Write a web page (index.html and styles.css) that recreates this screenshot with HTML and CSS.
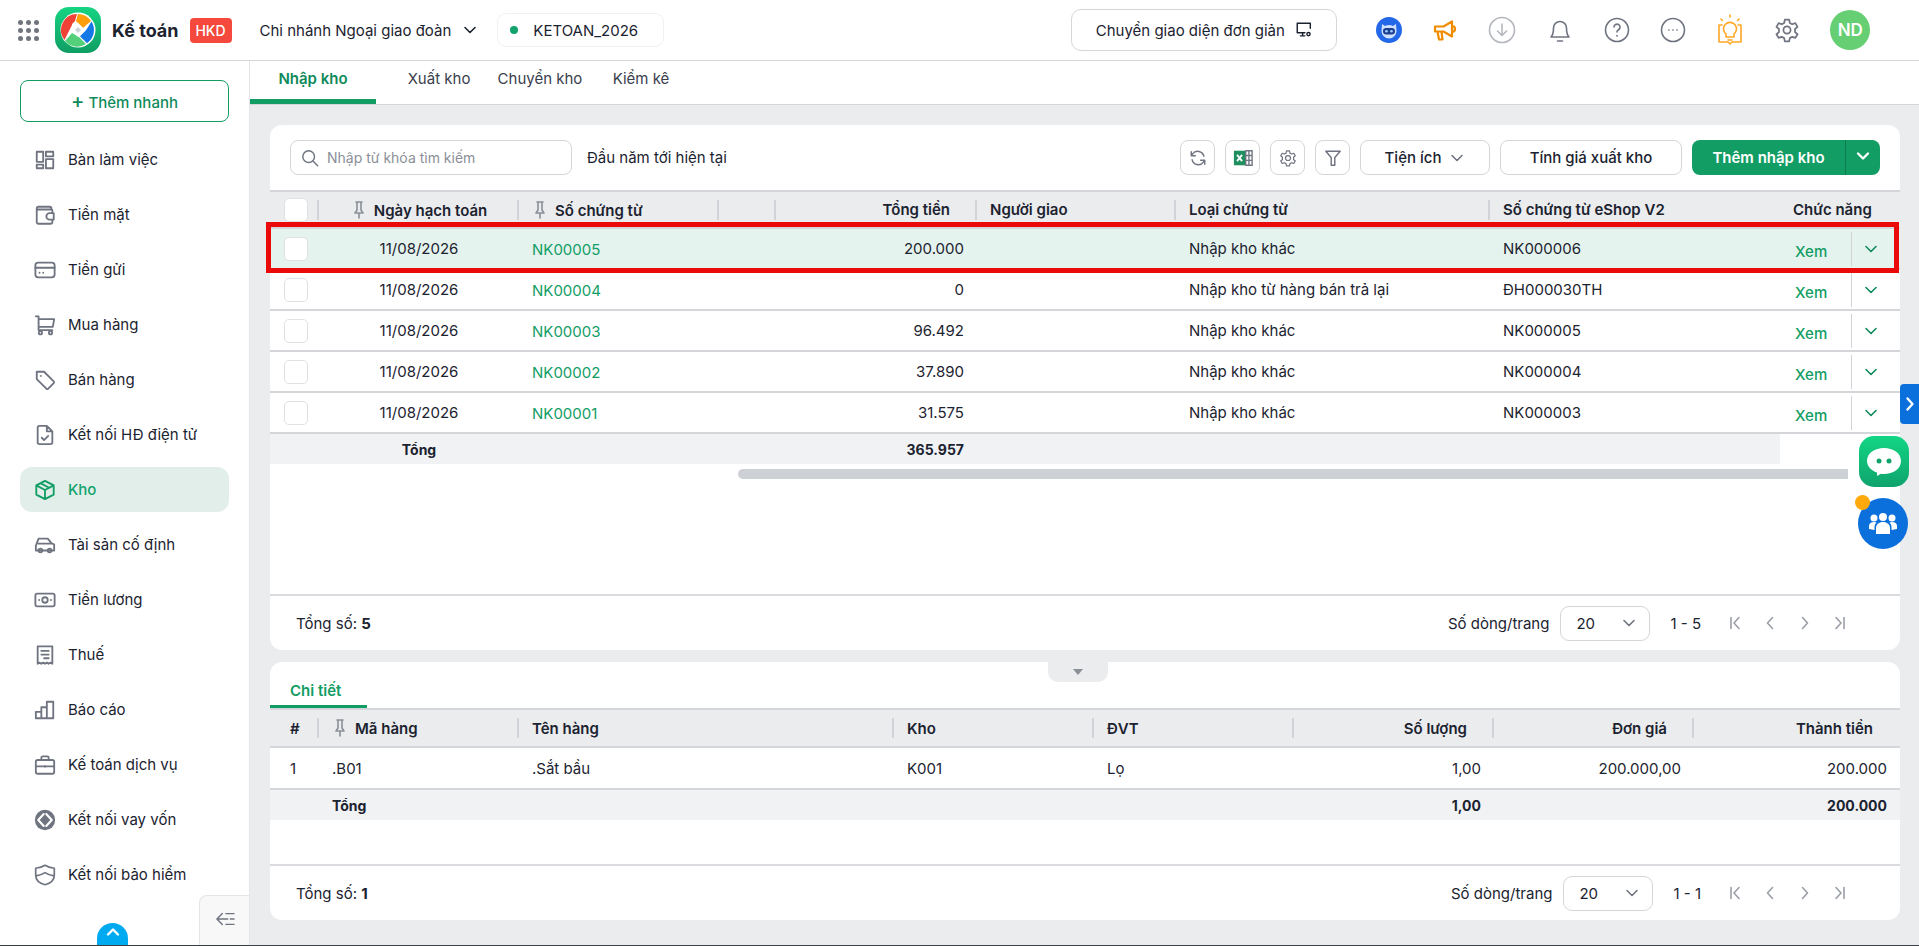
FILE: index.html
```html
<!DOCTYPE html>
<html lang="vi">
<head>
    <meta charset="UTF-8">
    <title>Kế toán - Nhập kho</title>
    <link rel="stylesheet" href="styles.css">
</head>
<body>
    <svg class="sprite" xmlns="http://www.w3.org/2000/svg">
        <symbol id="i-pin" viewBox="0 0 16 20"><path d="M5 2h6M6 2v8l-2 3h8l-2-3V2M8 13v5"/></symbol>
        <symbol id="i-down" viewBox="0 0 16 16"><path d="M3 5.5l5 5 5-5"/></symbol>
        <symbol id="i-first" viewBox="0 0 16 16"><path d="M4 2.5v11M12 2.5L7 8l5 5.5"/></symbol>
        <symbol id="i-prev" viewBox="0 0 16 16"><path d="M10.5 2.5L5.5 8l5 5.5"/></symbol>
        <symbol id="i-next" viewBox="0 0 16 16"><path d="M5.5 2.5l5 5.5-5 5.5"/></symbol>
        <symbol id="i-last" viewBox="0 0 16 16"><path d="M12 2.5v11M4 2.5L9 8l-5 5.5"/></symbol>
        <symbol id="i-gear" viewBox="0 0 24 24"><path d="M10 2.5h4l.6 3 2.2 1.2 2.9-1 2 3.4-2.3 2v2.8l2.3 2-2 3.4-2.9-1-2.2 1.2-.6 3h-4l-.6-3-2.2-1.2-2.9 1-2-3.4 2.3-2v-2.8l-2.3-2 2-3.4 2.9 1 2.2-1.2z"/><circle cx="12" cy="12" r="3.3"/></symbol>
    </svg>

    <header class="topbar">
        <div class="apps"><i></i><i></i><i></i><i></i><i></i><i></i><i></i><i></i><i></i></div>
        <div class="logo">
            <svg viewBox="0 0 46 46" width="46" height="46">
                <circle cx="23" cy="23" r="17.5" fill="#fff"/>
                <path d="M23 7a16 16 0 0 1 13 7l-8 7-7-7z" fill="#ff9d0a"/>
                <path d="M36.5 14.5a16 16 0 0 1-4.500 21.800l-7-7 6-6z" fill="#1478e6"/>
                <path d="M31 37a16 16 0 0 1-21-3l7-8 7 4z" fill="#55d07a"/>
                <path d="M9.500 33a16 16 0 0 1 12.500-26l-2 7-3 3 0 1z" fill="#ef4136"/>
                <path d="M23 16l7 7-7 7-7-7z" fill="#fff"/>
                <path d="M23 20l3 3-3 3-3-3z" fill="#cfd4da"/>
            </svg>
        </div>
        <span class="app-name">Kế toán</span>
        <span class="hkd">HKD</span>
        <button class="branch">Chi nhánh Ngoại giao đoàn <svg class="ico-sm dark"><use href="#i-down"/></svg></button>
        <div class="db-pill"><i></i>KETOAN_2026</div>

        <button class="switch-ui">Chuyển giao diện đơn giản
            <svg viewBox="0 0 20 20" width="18" height="18" class="line dark"><path d="M17 8V2.500H2.500V13H11M6 16.500h5M8.500 13v3.500"/><circle cx="15" cy="14.500" r="1.800"/></svg>
        </button>

        <div class="top-icons">
            <svg viewBox="0 0 26 26" width="26" height="26"><circle cx="13" cy="13" r="13" fill="#2368e8"/><path d="M6 7l3 2a9 9 0 0 1 8 0l3-2 .5 7a7.500 7.500 0 0 1-15 0z" fill="#cfe0ff"/><rect x="7" y="11" width="12" height="6.500" rx="3.200" fill="#1c3f8f"/><circle cx="10.500" cy="14.200" r="1.300" fill="#9fd0ff"/><circle cx="15.500" cy="14.200" r="1.300" fill="#9fd0ff"/></svg>
            <svg viewBox="0 0 26 26" width="26" height="26" class="line orange"><path d="M3 9.500h8.500L20 4.500v15l-8.500-5H3zM5.500 14.500l1.500 8h3.500l-1-8M20 9a3 3 0 0 1 0 6"/></svg>
            <svg viewBox="0 0 28 28" width="28" height="28" class="line pale"><circle cx="14" cy="14" r="12.500"/><path d="M14 8v11M9.500 15l4.500 4.500 4.500-4.500"/></svg>
            <svg viewBox="0 0 28 30" width="28" height="30" class="line gray"><path d="M5 22c2-2 2.500-4 2.500-9a6.500 6.500 0 0 1 13 0c0 5 .5 7 2.500 9zM5 22h18M11.500 26h5"/></svg>
            <svg viewBox="0 0 26 26" width="26" height="26" class="line gray"><circle cx="13" cy="13" r="11.500"/><path d="M10 10a3 3 0 1 1 4.500 2.700c-1 .6-1.500 1.200-1.500 2.300M13 18.500v.6"/></svg>
            <svg viewBox="0 0 26 26" width="26" height="26" class="line gray"><circle cx="13" cy="13" r="11.500"/><path d="M8.800 13h.2M12.900 13h.2M17 13h.2"/></svg>
            <svg viewBox="0 0 28 32" width="28" height="32" class="line amber"><path d="M3 11v17h9l2 2 2-2h9V11h-3M3 11h3"/><path d="M10 20a6.500 6.500 0 1 1 8 0v3h-8zM12 26h4M14 1v2M5 5l1.500 1.500M23 5l-1.500 1.500"/></svg>
            <svg viewBox="0 0 24 24" width="26" height="26" class="line gray"><use href="#i-gear"/></svg>
            <div class="avatar">ND</div>
        </div>
    </header>

    <div class="layout">
        <aside class="sidebar">
            <button class="quick-add"><span>+</span> Thêm nhanh</button>
            <nav class="menu">
                <a><svg viewBox="0 0 24 24"><path d="M3 3h7v11H3zM13 3h8v5h-8zM3 17h7v4H3zM13 11h8v10h-8z"/></svg>Bàn làm việc</a>
                <a><svg viewBox="0 0 24 24"><path d="M19 6V5a2 2 0 0 0-2-2H5a2 2 0 0 0-2 2v15a1.500 1.500 0 0 0 1.500 1.500H18a2 2 0 0 0 2-2v-2M3 6h16a1 1 0 0 1 1 1v3M21.500 10H17a2.500 2.500 0 0 0 0 7h4.500z"/></svg>Tiền mặt</a>
                <a><svg viewBox="0 0 24 24"><rect x="1.500" y="4" width="21" height="16" rx="3"/><path d="M1.500 9.500h21M6 15h.1M10 15h.1"/></svg>Tiền gửi</a>
                <a><svg viewBox="0 0 24 24"><path d="M2 2.500h3v15h15M5 5.500h17l-1.500 8.500H5"/><circle cx="7" cy="20.500" r="1.800"/><circle cx="18" cy="20.500" r="1.800"/></svg>Mua hàng</a>
                <a><svg viewBox="0 0 24 24"><path d="M3 3h8l10.500 10.500a1.500 1.500 0 0 1 0 2l-6 6a1.500 1.500 0 0 1-2 0L3 11z"/><path d="M7.500 7.500h.1"/></svg>Bán hàng</a>
                <a><svg viewBox="0 0 24 24"><path d="M14 2H6a2 2 0 0 0-2 2v16a2 2 0 0 0 2 2h12a2 2 0 0 0 2-2V8zM14 2v6h6M8.500 15l2.500 2.500 4.500-4.500"/></svg>Kết nối HĐ điện tử</a>
                <a class="active"><svg viewBox="0 0 24 24"><path d="M12 2l9.500 5v10L12 22l-9.500-5V7zM2.500 7l9.500 5 9.500-5M12 12v10M7 4.500l9.500 5"/></svg>Kho</a>
                <a><svg viewBox="0 0 24 24"><path d="M2 13l3-8h10l4 5 3 1.500V18h-20zM5 10.500h14"/><circle cx="7" cy="18" r="2"/><circle cx="17" cy="18" r="2"/></svg>Tài sản cố định</a>
                <a><svg viewBox="0 0 24 24"><rect x="1.500" y="5" width="21" height="14" rx="2"/><circle cx="12" cy="12" r="3"/><path d="M5.500 12h.1M18.500 12h.1"/></svg>Tiền lương</a>
                <a><svg viewBox="0 0 24 24"><path d="M4 2.500h16v19l-2-1.200-2 1.200-2-1.200-2 1.200-2-1.200-2 1.200-2-1.200-2 1.200zM8 7.500h8M8 11.500h8M11 15.500h5"/></svg>Thuế</a>
                <a><svg viewBox="0 0 24 24"><path d="M2 21v-7h6v7zM8 21V9h6v12zM14 21V3h7v18zM2 21h19"/></svg>Báo cáo</a>
                <a><svg viewBox="0 0 24 24"><rect x="2" y="6.500" width="20" height="15" rx="2"/><path d="M8 6.500V4a1.500 1.500 0 0 1 1.500-1.500h5A1.500 1.500 0 0 1 16 4v2.500M2 13.500h20M12 13v1"/></svg>Kế toán dịch vụ</a>
                <a><svg viewBox="0 0 26 26" class="big"><circle cx="13" cy="13" r="12" fill="#6f7480" stroke="none"/><path d="M11.500 6L5 13l6.500 7M14.500 6l6.500 7-6.500 7" stroke="#fff" stroke-width="2.500"/></svg>Kết nối vay vốn</a>
                <a><svg viewBox="0 0 26 26" class="big"><path d="M13 1.500c3 2 6.500 3 11 3.500v8c0 6-5 10-11 11.500C7 23 2 19 2 13V5c4.500-.500 8-1.500 11-3.500zM2.500 14c4-.500 7.500-1.800 10.500-3.800 3 2 6.500 3.300 10.500 3.800"/></svg>Kết nối bảo hiểm</a>
            </nav>
            <button class="scroll-top"><svg class="ico-sm white-line"><use href="#i-down"/></svg></button>
            <button class="collapse">
                <svg viewBox="0 0 24 20" width="22" height="18" class="line gray"><path d="M9 4l-6 6 6 6M3 10h12M13 4h9M18 10h4M13 16h9"/></svg>
            </button>
        </aside>

        <main class="content">
            <nav class="tabs">
                <a class="active">Nhập kho</a>
                <a>Xuất kho</a>
                <a>Chuyển kho</a>
                <a>Kiểm kê</a>
            </nav>

            <div class="panels">
                <section class="card card-main">
                    <div class="toolbar">
                        <div class="search">
                            <svg viewBox="0 0 20 20" width="18" height="18" class="line gray"><circle cx="8.500" cy="8.500" r="6.500"/><path d="M13.500 13.500l5 5"/></svg>
                            <span>Nhập từ khóa tìm kiếm</span>
                        </div>
                        <span class="period">Đầu năm tới hiện tại</span>
                        <div class="tools">
                            <button class="tool"><svg viewBox="0 0 20 20" width="18" height="18" class="line gray"><path d="M16.500 8A7 7 0 0 0 4 5.500L2.500 7.500M2.500 3v4.500H7M3.500 12A7 7 0 0 0 16 14.500l1.500-2M17.500 17v-4.500H13"/></svg></button>
                            <button class="tool">
                                <svg viewBox="0 0 22 22" width="20" height="20"><rect x="1" y="3" width="13" height="16" fill="#1f8f5f"/><path d="M4.500 7.500l5.500 7M10 7.500l-5.500 7" stroke="#fff" stroke-width="2"/><path d="M14 3h7v16h-7zM14 8.300h7M14 13.600h7M17.500 3v16" fill="none" stroke="#6f7480" stroke-width="1.500"/></svg>
                            </button>
                            <button class="tool"><svg viewBox="0 0 24 24" width="18" height="18" class="line gray"><use href="#i-gear"/></svg></button>
                            <button class="tool"><svg viewBox="0 0 20 20" width="18" height="18" class="line gray"><path d="M2 2.500h16l-6 7V18H8V9.500z"/></svg></button>
                            <button class="btn btn-util">Tiện ích <svg class="ico-sm gray"><use href="#i-down"/></svg></button>
                            <button class="btn btn-calc">Tính giá xuất kho</button>
                            <div class="btn-split">
                                <button>Thêm nhập kho</button>
                                <button class="more"><svg class="ico-sm white-line"><use href="#i-down"/></svg></button>
                            </div>
                        </div>
                    </div>

                    <table class="grid grid-main">
                        <colgroup>
                            <col style="width:49px"><col style="width:200px"><col style="width:200px"><col style="width:57px"><col style="width:201px"><col style="width:199px"><col style="width:314px"><col style="width:290px"><col>
                        </colgroup>
                        <thead>
                            <tr>
                                <th class="check"><span class="box"></span></th>
                                <th class="center"><svg class="pin"><use href="#i-pin"/></svg>Ngày hạch toán</th>
                                <th class="pinned"><svg class="pin"><use href="#i-pin"/></svg>Số chứng từ</th>
                                <th></th>
                                <th class="right">Tổng tiền</th>
                                <th>Người giao</th>
                                <th>Loại chứng từ</th>
                                <th class="flat">Số chứng từ eShop V2</th>
                                <th class="flat func">Chức năng</th>
                            </tr>
                        </thead>
                        <tbody>
                            <tr class="selected">
                                <td class="check"><span class="box"></span></td>
                                <td class="center">11/08/2026</td>
                                <td><a class="code">NK00005</a></td>
                                <td></td>
                                <td class="right">200.000</td>
                                <td></td>
                                <td>Nhập kho khác</td>
                                <td>NK000006</td>
                                <td class="actions"><div><a>Xem</a><span><svg class="ico-sm green"><use href="#i-down"/></svg></span></div></td>
                            </tr>
                            <tr>
                                <td class="check"><span class="box"></span></td>
                                <td class="center">11/08/2026</td>
                                <td><a class="code">NK00004</a></td>
                                <td></td>
                                <td class="right">0</td>
                                <td></td>
                                <td>Nhập kho từ hàng bán trả lại</td>
                                <td>ĐH000030TH</td>
                                <td class="actions"><div><a>Xem</a><span><svg class="ico-sm green"><use href="#i-down"/></svg></span></div></td>
                            </tr>
                            <tr>
                                <td class="check"><span class="box"></span></td>
                                <td class="center">11/08/2026</td>
                                <td><a class="code">NK00003</a></td>
                                <td></td>
                                <td class="right">96.492</td>
                                <td></td>
                                <td>Nhập kho khác</td>
                                <td>NK000005</td>
                                <td class="actions"><div><a>Xem</a><span><svg class="ico-sm green"><use href="#i-down"/></svg></span></div></td>
                            </tr>
                            <tr>
                                <td class="check"><span class="box"></span></td>
                                <td class="center">11/08/2026</td>
                                <td><a class="code">NK00002</a></td>
                                <td></td>
                                <td class="right">37.890</td>
                                <td></td>
                                <td>Nhập kho khác</td>
                                <td>NK000004</td>
                                <td class="actions"><div><a>Xem</a><span><svg class="ico-sm green"><use href="#i-down"/></svg></span></div></td>
                            </tr>
                            <tr>
                                <td class="check"><span class="box"></span></td>
                                <td class="center">11/08/2026</td>
                                <td><a class="code">NK00001</a></td>
                                <td></td>
                                <td class="right">31.575</td>
                                <td></td>
                                <td>Nhập kho khác</td>
                                <td>NK000003</td>
                                <td class="actions"><div><a>Xem</a><span><svg class="ico-sm green"><use href="#i-down"/></svg></span></div></td>
                            </tr>
                        </tbody>
                        <tfoot>
                            <tr>
                                <td></td>
                                <td class="center">Tổng</td>
                                <td></td>
                                <td></td>
                                <td class="right">365.957</td>
                                <td></td>
                                <td></td>
                                <td></td>
                                <td class="func-foot"></td>
                            </tr>
                        </tfoot>
                    </table>
                    <div class="hscroll"><i></i></div>
                    <div class="red-box"></div>

                    <div class="pager">
                        <span class="total">Tổng số: <b>5</b></span>
                        <span class="per-page">Số dòng/trang</span>
                        <div class="page-size">20 <svg class="ico-sm gray"><use href="#i-down"/></svg></div>
                        <span class="range">1 - 5</span>
                        <div class="page-nav">
                            <svg><use href="#i-first"/></svg><svg><use href="#i-prev"/></svg><svg><use href="#i-next"/></svg><svg><use href="#i-last"/></svg>
                        </div>
                    </div>
                </section>

                <section class="card card-detail">
                    <div class="detail-toggle"><i></i></div>
                    <div class="detail-tabs"><a>Chi tiết</a></div>
                    <table class="grid grid-detail">
                        <colgroup>
                            <col style="width:49px"><col style="width:200px"><col style="width:375px"><col style="width:200px"><col style="width:200px"><col style="width:200px"><col style="width:200px"><col>
                        </colgroup>
                        <thead>
                            <tr>
                                <th class="num">#</th>
                                <th><svg class="pin"><use href="#i-pin"/></svg>Mã hàng</th>
                                <th>Tên hàng</th>
                                <th>Kho</th>
                                <th>ĐVT</th>
                                <th class="right">Số lượng</th>
                                <th class="right">Đơn giá</th>
                                <th class="right flat">Thành tiền</th>
                            </tr>
                        </thead>
                        <tbody>
                            <tr>
                                <td class="num">1</td>
                                <td>.B01</td>
                                <td>.Sắt bầu</td>
                                <td>K001</td>
                                <td>Lọ</td>
                                <td class="right">1,00</td>
                                <td class="right">200.000,00</td>
                                <td class="right">200.000</td>
                            </tr>
                        </tbody>
                        <tfoot>
                            <tr>
                                <td></td>
                                <td>Tổng</td>
                                <td></td>
                                <td></td>
                                <td></td>
                                <td class="right">1,00</td>
                                <td></td>
                                <td class="right">200.000</td>
                            </tr>
                        </tfoot>
                    </table>
                    <div class="pager">
                        <span class="total">Tổng số: <b>1</b></span>
                        <span class="per-page">Số dòng/trang</span>
                        <div class="page-size">20 <svg class="ico-sm gray"><use href="#i-down"/></svg></div>
                        <span class="range">1 - 1</span>
                        <div class="page-nav">
                            <svg><use href="#i-first"/></svg><svg><use href="#i-prev"/></svg><svg><use href="#i-next"/></svg><svg><use href="#i-last"/></svg>
                        </div>
                    </div>
                </section>
            </div>
        </main>
    </div>

    <div class="side-tab"><svg class="ico-sm white-line"><use href="#i-next"/></svg></div>
    <div class="chat-bot">
        <svg viewBox="0 0 50 50" width="50" height="50"><path d="M8 25c0-8 8-13 17-13s17 5 17 13-8 13-17 13c-1 0-2 0-3-.2L18 40v-3.500C12 34.500 8 30 8 25z" fill="#fff"/><circle cx="20" cy="25" r="2.500" fill="#12a36c"/><circle cx="30" cy="25" r="2.500" fill="#12a36c"/></svg>
    </div>
    <div class="community">
        <svg viewBox="0 0 30 24" width="30" height="24" fill="#fff"><circle cx="6" cy="6" r="3.500"/><circle cx="15" cy="5" r="4"/><circle cx="24" cy="6" r="3.500"/><path d="M1 17v-3c0-2.500 2-4 5-4 1 0 2 .2 2.500.5C7 12 6.500 13.500 6.500 15v3zM29 17v-3c0-2.500-2-4-5-4-1 0-2 .2-2.500.5 1.500 1.500 2 3 2 4.500v3zM8 22v-6c0-3.500 3-6 7-6s7 2.500 7 6v6z"/></svg>
    </div>
    <i class="community-dot"></i>
</body>
</html>
```

FILE: styles.css
```css
*{
    box-sizing: border-box;
}
html,body{
    height: 100%;
}
body{
    margin: 0;
    height: 946px;
    overflow: hidden;
    font-family: Inter, "Noto Sans", sans-serif;
    font-size: 15px;
    color: #1c2330;
    background-color: #ebecee;
    border-bottom: 1px solid #3c3f44;
    display: flex;
    flex-direction: column;
}
button{
    font: inherit;
    color: inherit;
    background: transparent;
    border: none;
    padding: 0;
    cursor: pointer;
}
.sprite{
    display: none;
}
.line,.ico-sm,.pin,.page-nav svg{
    fill: none;
    stroke-width: 1.6;
    stroke-linecap: round;
    stroke-linejoin: round;
}
.dark{ stroke: #1c2330; }
.gray{ stroke: #6f7480; }
.pale{ stroke: #b4b7bc; }
.orange{ stroke: #f08c00; stroke-width: 2.2; }
.amber{ stroke: #ffa726; }
.green{ stroke: #0f8a5a; }
.white-line{ stroke: #fff; stroke-width: 2.4; }
.ico-sm{
    width: 16px;
    height: 16px;
}

/* top bar */
.topbar{
    height: 61px;
    flex: none;
    display: flex;
    align-items: center;
    background-color: #fff;
    border-bottom: 1px solid #d4d6da;
    padding-left: 18px;
}
.apps{
    width: 21px;
    display: grid;
    grid-template-columns: repeat(3,5px);
    gap: 3px;
}
.apps i{
    width: 5px;
    height: 5px;
    border-radius: 50%;
    background-color: #71757c;
}
.logo{
    width: 46px;
    height: 46px;
    margin-left: 16px;
    border-radius: 14px;
    background: linear-gradient(#16d482,#0f9d63);
}
.logo svg{
    display: block;
}
.app-name{
    margin-left: 11px;
    font-size: 18px;
    font-weight: 700;
}
.hkd{
    margin-left: 11px;
    width: 42px;
    height: 25px;
    line-height: 25px;
    text-align: center;
    color: #fff;
    font-size: 14px;
    font-weight: 500;
    border-radius: 4px;
    background-color: #f4493c;
}
.branch{
    margin-left: 28px;
    display: flex;
    align-items: center;
    gap: 11px;
}
.db-pill{
    margin-left: 19px;
    width: 167px;
    height: 34px;
    display: flex;
    align-items: center;
    padding-left: 12px;
    border: 1px solid #f0f1f3;
    border-radius: 9px;
}
.db-pill i{
    width: 8px;
    height: 8px;
    margin-right: 15px;
    border-radius: 50%;
    background-color: #12a36c;
}
.switch-ui{
    margin-left: 407px;
    width: 266px;
    height: 42px;
    display: flex;
    align-items: center;
    justify-content: center;
    gap: 10px;
    border: 1px solid #d4d6da;
    border-radius: 10px;
}
.top-icons{
    margin-left: 39px;
    display: flex;
    align-items: center;
    width: 494px;
    justify-content: space-between;
}
.avatar{
    width: 40px;
    height: 40px;
    line-height: 40px;
    text-align: center;
    color: #fff;
    font-size: 17px;
    font-weight: 600;
    border-radius: 50%;
    background-color: #66cf73;
}

/* sidebar */
.layout{
    flex: 1;
    display: flex;
    min-height: 0;
}
.sidebar{
    position: relative;
    width: 250px;
    flex: none;
    padding: 19px 20px 0;
    background-color: #fff;
    border-right: 1px solid #e4e5e8;
}
.quick-add{
    width: 209px;
    height: 42px;
    color: #0f8a5a;
    font-weight: 500;
    border: 1px solid #129d65;
    border-radius: 8px;
}
.quick-add span{
    font-size: 20px;
    line-height: 1;
}
.menu{
    margin-top: 10px;
}
.menu a{
    height: 55px;
    display: flex;
    align-items: center;
    gap: 12px;
    padding-left: 14px;
    border-radius: 12px;
}
.menu svg{
    width: 22px;
    height: 22px;
    flex: none;
    fill: none;
    stroke: #6f7480;
    stroke-width: 2;
    stroke-linecap: round;
    stroke-linejoin: round;
}
.menu a.active{
    height: 45px;
    margin: 5px 0;
    color: #12a36c;
    font-weight: 500;
    background-color: #e1eee9;
}
.menu a.active svg{
    stroke: #129d65;
}
.scroll-top{
    position: absolute;
    left: 97px;
    bottom: 0;
    width: 31px;
    height: 22px;
    border-radius: 16px 16px 0 0;
    background-color: #00aaf0;
}
.scroll-top svg{
    transform: rotate(180deg);
}
.collapse{
    position: absolute;
    right: 0;
    bottom: 0;
    width: 50px;
    height: 50px;
    background-color: #f8f8f9;
    border: 1px solid #e4e5e8;
    border-width: 1px 0 0 1px;
    border-radius: 8px 0 0 0;
}

/* content */
.content{
    flex: 1;
    min-width: 0;
    display: flex;
    flex-direction: column;
}
.tabs{
    height: 44px;
    flex: none;
    display: flex;
    background-color: #fff;
    border-bottom: 1px solid #d4d6da;
}
.tabs a{
    width: 126px;
    margin-right: -25px;
    padding-top: 8px;
    text-align: center;
    color: #3a404c;
}
.tabs a.active{
    margin-right: 0;
    color: #0f8a5a;
    font-weight: 600;
    border-bottom: 5px solid #129d65;
}
.panels{
    flex: 1;
    padding: 20px 19px 0 20px;
}
.card{
    position: relative;
    display: flex;
    flex-direction: column;
    background-color: #fff;
    border-radius: 12px;
}
.card-main{
    height: 525px;
}
.card-detail{
    height: 258px;
    margin-top: 12px;
}

/* toolbar */
.toolbar{
    height: 65px;
    flex: none;
    display: flex;
    align-items: center;
    padding: 0 20px;
}
.search{
    width: 282px;
    height: 35px;
    display: flex;
    align-items: center;
    gap: 8px;
    padding-left: 10px;
    color: #8a8f98;
    font-size: 14px;
    border: 1px solid #d4d6da;
    border-radius: 8px;
}
.period{
    margin-left: 15px;
}
.tools{
    margin-left: auto;
    display: flex;
    gap: 10px;
}
.tool,.btn{
    height: 35px;
    display: flex;
    align-items: center;
    justify-content: center;
    border: 1px solid #d4d6da;
    border-radius: 8px;
}
.tool{
    width: 35px;
}
.btn{
    font-weight: 500;
}
.btn-util{
    width: 130px;
    gap: 8px;
}
.btn-calc{
    width: 182px;
}
.btn-split{
    width: 188px;
    height: 35px;
    display: flex;
    color: #fff;
    font-weight: 600;
    border-radius: 8px;
    background-color: #129d65;
}
.btn-split button:first-child{
    flex: 1;
}
.btn-split .more{
    width: 35px;
    border-left: 1px solid #0c7a4e;
}

/* tables */
.grid{
    width: 100%;
    flex: none;
    table-layout: fixed;
    border-collapse: collapse;
}
.grid th{
    height: 37px;
    padding: 0 13px;
    text-align: left;
    font-weight: 600;
    white-space: nowrap;
    background: linear-gradient(#d0d3d8,#d0d3d8) right center / 2px 20px no-repeat #ebecee;
    border-top: 2px solid #d4d6da;
    border-bottom: 2px solid #d4d6da;
}
.grid th.flat{
    background: #ebecee;
}
.grid td{
    height: 41px;
    padding: 0 13px;
    border-bottom: 2px solid #d4d6da;
}
.grid .right{
    text-align: right;
}
.grid th.right{
    padding-right: 27px;
}
.grid .center{
    text-align: center;
}
.grid .check{
    padding: 0 0 0 14px;
}
.box{
    display: block;
    width: 24px;
    height: 24px;
    background-color: #fff;
    border: 1px solid #dfe1e5;
    border-radius: 5px;
}
.pin{
    width: 16px;
    height: 20px;
    margin-right: 7px;
    vertical-align: -4px;
    stroke: #8a8f98;
}
.th-pin{
    padding-left: 13px;
}
.code{
    position: relative;
    top: 1px;
    color: #129d65;
}
.selected td{
    background-color: #e5f3ee;
}
.grid-main th.func{
    padding: 0;
    text-align: left;
    padding-left: 13px;
}
.grid-main td.actions{
    padding: 0;
}
.actions div{
    height: 100%;
    display: flex;
    align-items: center;
    padding-left: 15px;
}
.actions a{
    width: 56px;
    padding-top: 6px;
    color: #129d65;
    font-weight: 500;
}
.actions span{
    width: 38px;
    height: 34px;
    display: flex;
    align-items: center;
    justify-content: center;
    border-left: 1px solid #d0d3d8;
}
.grid tfoot td{
    height: 31px;
    font-weight: 700;
    font-size: 14px;
    background-color: #f1f2f4;
    border-top: 2px solid #d0d3d8;
    border-bottom: none;
}
.grid tfoot td.func-foot{
    background-color: #fff;
    border-top: none;
}
.hscroll{
    height: 10px;
    margin: 5px 52px 0 468px;
}
.hscroll i{
    display: block;
    height: 100%;
    border-radius: 5px 0 0 5px;
    background-color: #cdd0d5;
}
.red-box{
    position: absolute;
    left: -4px;
    right: 1px;
    top: 97px;
    height: 51px;
    border: 5px solid #ea0a0a;
}
.grid-detail th{
    height: 38px;
}
.grid-detail td{
    height: 42px;
}
.grid-detail td:nth-child(2){
    padding-left: 13px;
}
.grid-detail .num{
    padding-left: 20px;
    padding-right: 0;
}

/* pager */
.pager{
    margin-top: auto;
    height: 56px;
    flex: none;
    display: flex;
    align-items: center;
    padding-left: 26px;
    border-top: 2px solid #d9dbdf;
    font-size: 15px;
}
.per-page{
    margin-left: auto;
}
.page-size{
    width: 90px;
    height: 35px;
    margin-left: 11px;
    display: flex;
    align-items: center;
    justify-content: space-between;
    padding: 0 12px 0 15px;
    border: 1px solid #d4d6da;
    border-radius: 9px;
}
.range{
    margin-left: 20px;
}
.page-nav{
    display: flex;
    margin: 0 52px 0 26px;
    gap: 19px;
}
.page-nav svg{
    width: 16px;
    height: 16px;
    stroke: #9a9ea6;
}

/* detail */
.detail-toggle{
    position: absolute;
    left: 778px;
    top: 0;
    width: 60px;
    height: 20px;
    display: flex;
    align-items: center;
    justify-content: center;
    background-color: #ebecee;
    border-radius: 0 0 10px 10px;
}
.detail-toggle i{
    border: 5px solid transparent;
    border-top: 6px solid #8a8f98;
    border-bottom: none;
}
.detail-tabs{
    height: 46px;
    flex: none;
    display: flex;
    align-items: flex-end;
}
.detail-tabs a{
    width: 97px;
    height: 42px;
    padding: 15px 0 0 20px;
    color: #129d65;
    font-weight: 600;
    border-bottom: 3px solid #129d65;
}

/* floating widgets on the right */
.side-tab{
    position: absolute;
    right: 0;
    top: 384px;
    width: 19px;
    height: 40px;
    display: flex;
    align-items: center;
    justify-content: center;
    border-radius: 4px 0 0 4px;
    background-color: #0b6fdc;
}
.chat-bot{
    position: absolute;
    left: 1859px;
    top: 436px;
    width: 50px;
    height: 51px;
    border-radius: 15px;
    background: linear-gradient(#12d684,#0fa36c);
}
.community{
    position: absolute;
    left: 1858px;
    top: 498px;
    width: 50px;
    height: 51px;
    display: flex;
    align-items: center;
    justify-content: center;
    border-radius: 50%;
    background-color: #0b6fdc;
}
.community-dot{
    position: absolute;
    left: 1855px;
    top: 495px;
    width: 15px;
    height: 15px;
    border-radius: 50%;
    background-color: #ffa90a;
}
```
